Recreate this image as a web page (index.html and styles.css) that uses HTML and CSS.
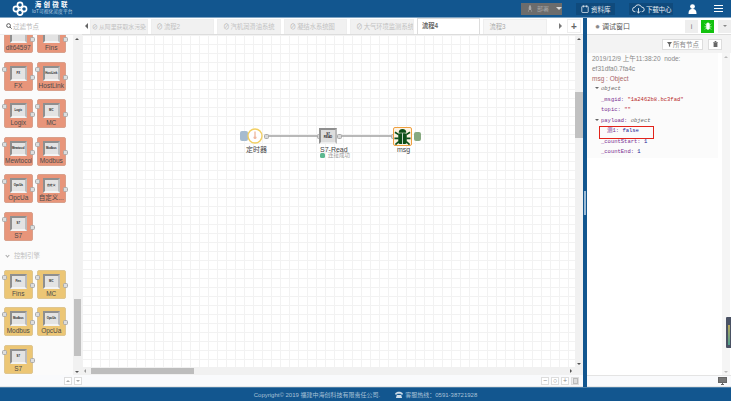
FILE: index.html
```html
<!DOCTYPE html>
<html lang="en">
<head>
  <meta charset="UTF-8">
  <title>海创微联</title>
  <link rel="stylesheet" href="styles.css">
</head>
<body>
  <header class="topbar">
    <div class="brand">
      <svg class="brand-logo" viewBox="0 0 16 15" width="16" height="15">
        <g fill="none" stroke="#fff" stroke-width="1.6">
          <circle cx="8" cy="4" r="2.6"/>
          <circle cx="4" cy="8" r="2.6"/>
          <circle cx="12" cy="8" r="2.6"/>
          <circle cx="8" cy="11.5" r="2.6"/>
        </g>
      </svg>
      <div class="brand-text">
        <div class="brand-name">海创微联</div>
        <div class="brand-sub">IoT可视化灵度平台</div>
      </div>
    </div>
    <div class="top-actions">
      <div class="deploy">
        <svg viewBox="0 0 8 10" width="6" height="9"><path d="M4 0 C6 2 6 5 5.5 7 H2.5 C2 5 2 2 4 0Z M1 9 L2.5 6.5 V9Z M7 9 L5.5 6.5 V9Z" fill="#a8a8a8"/></svg>
        <span>部署</span>
        <i class="deploy-caret"></i>
      </div>
      <div class="top-link link-docs">
        <svg viewBox="0 0 10 10" width="8" height="8"><rect x="1" y="1.5" width="8" height="8" rx="1" fill="none" stroke="#e8eef4" stroke-width="1"/><path d="M3 0.5V3M7 0.5V3" stroke="#e8eef4"/></svg>
        <span>资料库</span>
      </div>
      <div class="top-link link-down">
        <svg viewBox="0 0 14 11" width="13" height="10"><path d="M3.5 8.5H3A2.5 2.5 0 0 1 3 3.5 A4 4 0 0 1 10.5 3.5 A2.5 2.5 0 0 1 11 8.5H10.5" fill="none" stroke="#e8eef4"/><path d="M7 4.5V10M5 8l2 2 2-2" fill="none" stroke="#e8eef4"/></svg>
        <span>下载中心</span>
      </div>
      <svg class="user-icon" viewBox="0 0 9 10" width="9" height="10"><circle cx="4.5" cy="2.6" r="2.4" fill="#fff"/><path d="M0.5 10C0.5 6 2 5 4.5 5S8.5 6 8.5 10Z" fill="#fff"/></svg>
      <div class="menu-icon"><i></i><i></i><i></i></div>
    </div>
  </header>

  <main class="workspace">
    <aside class="palette">
      <div class="palette-filter">
        <svg viewBox="0 0 7 7" width="6" height="6"><circle cx="3" cy="3" r="2.2" fill="none" stroke="#444"/><path d="M4.6 4.6L6.6 6.6" stroke="#444"/></svg>
        <span>过滤节点</span>
      </div>
      <div class="palette-body">
        <div class="palette-list">
          <div class="node-grid node-grid-first">
            <div class="pnode orange"><div class="pnode-icon"></div><span>dlt64597</span><i class="port-r"></i></div>
            <div class="pnode orange"><div class="pnode-icon"></div><span>Fins</span><i class="port-r"></i></div>
            <div class="pnode orange"><i class="port-l"></i><div class="pnode-icon"><b>FX</b></div><span>FX</span><i class="port-r"></i></div>
            <div class="pnode orange"><i class="port-l"></i><div class="pnode-icon"><b>HostLink</b></div><span>HostLink</span><i class="port-r"></i></div>
            <div class="pnode orange"><i class="port-l"></i><div class="pnode-icon"><b>Logix</b></div><span>Logix</span><i class="port-r"></i></div>
            <div class="pnode orange"><i class="port-l"></i><div class="pnode-icon"><b>MC</b></div><span>MC</span><i class="port-r"></i></div>
            <div class="pnode orange"><i class="port-l"></i><div class="pnode-icon"><b>Mewtocol</b></div><span>Mewtocol</span><i class="port-r"></i></div>
            <div class="pnode orange"><i class="port-l"></i><div class="pnode-icon"><b>Modbus</b></div><span>Modbus</span><i class="port-r"></i></div>
            <div class="pnode orange"><i class="port-l"></i><div class="pnode-icon"><b>OpcUa</b></div><span>OpcUa</span><i class="port-r"></i></div>
            <div class="pnode orange"><i class="port-l"></i><div class="pnode-icon"><b>自定义</b></div><span>自定义...</span><i class="port-r"></i></div>
            <div class="pnode orange"><i class="port-l"></i><div class="pnode-icon"><b>S7</b></div><span>S7</span><i class="port-r"></i></div>
          </div>
          <div class="palette-section"><i></i>控制引擎</div>
          <div class="node-grid">
            <div class="pnode yellow"><i class="port-l"></i><div class="pnode-icon"><b>Fins</b></div><span>Fins</span><i class="port-r"></i></div>
            <div class="pnode yellow"><i class="port-l"></i><div class="pnode-icon"><b>MC</b></div><span>MC</span><i class="port-r"></i></div>
            <div class="pnode yellow"><i class="port-l"></i><div class="pnode-icon"><b>Modbus</b></div><span>Modbus</span><i class="port-r"></i></div>
            <div class="pnode yellow"><i class="port-l"></i><div class="pnode-icon"><b>OpcUa</b></div><span>OpcUa</span><i class="port-r"></i></div>
            <div class="pnode yellow"><i class="port-l"></i><div class="pnode-icon"><b>S7</b></div><span>S7</span><i class="port-r"></i></div>
          </div>
        </div>
        <div class="palette-scroll">
          <i class="arrow-up"></i>
          <div class="palette-thumb"></div>
          <i class="arrow-down"></i>
        </div>
      </div>
      <div class="palette-foot">
        <button class="mini-btn"><i class="arrow-up"></i></button>
        <button class="mini-btn"><i class="arrow-down"></i></button>
      </div>
    </aside>

    <section class="editor">
      <div class="tabs">
        <i class="tab-prev"></i>
        <div class="tab tab-first off"><em>⊘</em>从阿里获取水污染</div>
        <div class="tab off"><em>⊘</em>流程2</div>
        <div class="tab off"><em>⊘</em>汽机润滑油系统</div>
        <div class="tab off"><em>⊘</em>凝结水系统图</div>
        <div class="tab off"><em>⊘</em>大气环境监测系统</div>
        <div class="tab active">流程4</div>
        <div class="tab plain">流程3</div>
        <i class="tab-next"></i>
        <div class="tab-add">+</div>
      </div>
      <div class="canvas-wrap">
        <div class="canvas">
          <svg class="wires" width="493" height="332">
            <path d="M186 101H235M257 101H311" stroke="#a3a3a3" stroke-width="1.5" fill="none"/>
          </svg>

          <i class="inject-btn"></i>
          <div class="timer">
            <svg viewBox="0 0 16 16" width="16" height="16"><circle cx="8" cy="8" r="7" fill="#fff" stroke="#f2cf63" stroke-width="1.4"/><path d="M8 3.500V8" stroke="#e8a080" stroke-width="1"/><circle cx="8" cy="9.500" r="1.500" fill="#f0b8a0"/></svg>
          </div>
          <i class="fport fport-timer"></i>
          <div class="flabel flabel-timer">定时器</div>

          <i class="fport fport-s7in"></i>
          <div class="s7"><b>S7<br>READ</b></div>
          <i class="fport fport-s7out"></i>
          <div class="flabel flabel-s7">S7-Read</div>
          <div class="fstatus"><i></i>连接成功</div>

          <i class="fport fport-msg"></i>
          <div class="bug">
            <svg viewBox="0 0 18 18" width="17" height="17">
              <path d="M5 5A4 4 0 0 1 13 5Z" fill="#0d4f18"/>
              <rect x="4.500" y="5.500" width="9" height="11.500" rx="2" fill="#0d4f18"/>
              <path d="M9 5.500V17" stroke="#fff" stroke-width="0.800"/>
              <path d="M5 7L1 4.500M13 7L17 4.500M5 11H0.500M13 11H17.500M5 14.500L1.500 17.500M13 14.500L16.500 17.500" stroke="#0d4f18" stroke-width="1.800" fill="none"/>
            </svg>
          </div>
          <i class="debug-btn"></i>
          <div class="flabel flabel-msg">msg</div>
        </div>
        <div class="vscroll">
          <i class="arrow-up"></i>
          <div class="vthumb"></div>
          <i class="arrow-down"></i>
        </div>
        <div class="hscroll">
          <i class="arrow-left"></i>
          <div class="hthumb"></div>
          <i class="arrow-right"></i>
        </div>
      </div>
      <div class="editor-foot">
        <button class="mini-btn">−</button>
        <button class="mini-btn">○</button>
        <button class="mini-btn">+</button>
        <button class="mini-btn mini-map"><i></i></button>
      </div>
    </section>

    <div class="divider"><i></i></div>

    <aside class="debug">
      <div class="debug-tabs">
        <div class="debug-tab"><em>✹</em>调试窗口</div>
        <button class="side-btn">i</button>
        <button class="side-btn side-green">
          <svg viewBox="0 0 10 10" width="8" height="8"><path d="M3 3.500A2 2.500 0 0 1 7 3.500V7A2 2.500 0 0 1 3 7Z M1 2L3 4M9 2L7 4M0.500 6H3M9.500 6H7M1 9.500L3 7.500M9 9.500L7 7.500" fill="#fff" stroke="#fff" stroke-width="0.700"/></svg>
        </button>
        <button class="side-btn side-more"><i></i></button>
      </div>
      <div class="debug-tools">
        <button class="tool-btn">
          <svg viewBox="0 0 6 6" width="5" height="5"><path d="M0 0H6L3.700 3V6L2.300 5V3Z" fill="#666"/></svg>所有节点
        </button>
        <button class="tool-btn tool-trash">
          <svg viewBox="0 0 6 7" width="5" height="6"><path d="M0 1H6V1.600H0ZM2 0H4V1H2ZM0.700 2H5.300V7H0.700Z" fill="#666"/></svg>
        </button>
      </div>
      <div class="debug-body">
        <div class="debug-log">
          <div class="log-meta">2019/12/9 上午11:38:20&nbsp;&nbsp;node:<br>ef31dfa0.7fa4c</div>
          <div class="log-topic">msg : Object</div>
          <div class="log-tree">
            <div class="tree-row tree-top"><i class="tree-caret"></i><em>object</em></div>
            <div class="tree-row"><span class="k">_msgid:</span> <span class="s">"1a2462b8.bc3fad"</span></div>
            <div class="tree-row"><span class="k">topic:</span> <span class="s">""</span></div>
            <div class="tree-row tree-top"><i class="tree-caret"></i><span class="k">payload:</span> <em>object</em></div>
            <div class="tree-row tree-hit"><span class="k">测1:</span> <span class="b">false</span></div>
            <div class="tree-row"><span class="k">_countStart:</span> <span class="b">1</span></div>
            <div class="tree-row"><span class="k">_countEnd:</span> <span class="b">1</span></div>
          </div>
        </div>
        <div class="debug-scroll">
          <i class="arrow-up"></i>
          <i class="arrow-down"></i>
        </div>
        <div class="edge-tab"><i></i></div>
      </div>
      <div class="debug-foot">
        <svg viewBox="0 0 9 8" width="9" height="8"><rect x="0.500" y="0.500" width="8" height="5" fill="#777" stroke="#666"/><path d="M3 7.500H6M4.500 6V7.500" stroke="#666"/></svg>
      </div>
    </aside>
  </main>

  <footer class="bottombar">
    <span>Copyright© 2019 福建中海创科技有限责任公司.</span>
    <span class="hotline">
      <svg viewBox="0 0 9 8" width="8" height="7"><path d="M0 3C2 0 7 0 9 3V4H6.500V3H2.500V4H0ZM2 4.500H7L8 8H1Z" fill="#cfdde9"/></svg>
      客服热线：0591-38721928
    </span>
  </footer>
</body>
</html>
```

FILE: styles.css
```css
* {
  margin: 0;
  padding: 0;
  box-sizing: border-box;
}

html, body {
  height: 401px;
  overflow: hidden;
}

body {
  display: flex;
  flex-direction: column;
  width: 731px;
  font-family: "Liberation Sans", "Noto Sans CJK SC", sans-serif;
  font-size: 7px;
  color: #555;
  background: #fff;
}

em, i {
  font-style: normal;
}

button {
  font-family: inherit;
  border: none;
}

/* header */
.topbar {
  height: 18px;
  flex: none;
  display: flex;
  justify-content: space-between;
  background: #12568f;
  border-bottom: 1px solid #7ea3c2;
  color: #fff;
}

.brand {
  display: flex;
  align-items: center;
  gap: 4px;
  padding-left: 12px;
}

.brand-text {
  text-align: center;
  line-height: 6.500px;
}

.brand-name {
  font-size: 6.500px;
  font-weight: bold;
  letter-spacing: 2.200px;
}

.brand-sub {
  font-size: 4.800px;
  color: #b9cfe0;
}

.top-actions {
  display: flex;
  align-items: center;
  padding-right: 8px;
}

.deploy {
  width: 41px;
  height: 12px;
  display: flex;
  align-items: center;
  gap: 4px;
  padding-left: 6px;
  background: #6c6c6c;
  color: #a5a5a5;
  font-size: 6px;
}

.deploy-caret {
  margin-left: 3px;
  border: 3px solid transparent;
  border-top-color: #ddd;
  border-bottom: none;
}

.top-link {
  height: 12px;
  display: flex;
  align-items: center;
  gap: 2px;
  background: #0f4a7c;
  color: #e8eef4;
  font-size: 6.500px;
  white-space: nowrap;
}

.link-docs {
  width: 39px;
  margin-left: 14px;
  padding-left: 5px;
}

.link-down {
  width: 44px;
  margin-left: 14px;
  padding-left: 3px;
  gap: 1px;
}

.link-down span {
  letter-spacing: -0.200px;
}

.user-icon {
  margin-left: 15px;
}

.menu-icon {
  width: 9px;
  margin-left: 17px;
  display: flex;
  flex-direction: column;
  gap: 1.500px;
}

.menu-icon i {
  height: 1.500px;
  background: #fff;
}

/* main columns */
.workspace {
  flex: 1;
  min-height: 0;
  display: flex;
  background: #fff;
}

.palette {
  width: 82px;
  flex: none;
  display: flex;
  flex-direction: column;
}

.palette-filter {
  height: 17px;
  flex: none;
  display: flex;
  align-items: center;
  gap: 1px;
  padding-left: 6px;
  color: #b5b5b5;
  font-size: 6.500px;
  background: #fff;
  border-bottom: 1px solid #eee;
}

.palette-body {
  flex: 1;
  min-height: 0;
  display: flex;
  overflow: hidden;
  background: #fbfbfb;
}

.palette-list {
  width: 73px;
  flex: none;
  overflow: hidden;
}

.node-grid {
  display: grid;
  grid-template-columns: 28.500px 28.500px;
  grid-auto-rows: 29px;
  column-gap: 4.500px;
  row-gap: 8.500px;
  padding-left: 4px;
}

.node-grid-first {
  margin-top: -11px;
}

.pnode {
  position: relative;
  height: 29px;
  padding-top: 3px;
  border-radius: 2px;
  border: 1px solid #bbb;
  text-align: center;
  color: #4a4a4a;
  font-size: 6.500px;
  line-height: 8px;
  white-space: nowrap;
}

.pnode.orange {
  background: #e8957a;
  border-color: #d9a08b;
}

.pnode.yellow {
  background: #ecc675;
  border-color: #dfc690;
}

.pnode span {
  display: block;
  margin-top: 1px;
  overflow: hidden;
}

.pnode-icon {
  width: 17px;
  height: 15px;
  margin: 0 auto;
  display: flex;
  align-items: center;
  justify-content: center;
  background: #e3e3e3;
  border: 2px solid #8f8f8f;
  border-right-color: #bcbcbc;
  border-bottom-color: #f3f3f3;
}

.pnode-icon b {
  font-size: 2.800px;
  line-height: 3px;
  color: #222;
  white-space: nowrap;
}

.port-l, .port-r {
  position: absolute;
  width: 5px;
  height: 5px;
  background: #ddd;
  border: 1px solid #aaa;
  border-radius: 1.500px;
}

.port-l {
  left: -3px;
  top: 4px;
}

.port-r {
  right: -3px;
  top: 12px;
}

.palette-section {
  height: 29px;
  display: flex;
  align-items: center;
  gap: 5px;
  padding: 0 0 0 6px;
  color: #bdbdbd;
  font-size: 6.500px;
}

.palette-section i {
  width: 3px;
  height: 3px;
  border-right: 1px solid #aaa;
  border-bottom: 1px solid #aaa;
  transform: rotate(45deg);
}

.palette-scroll {
  width: 9px;
  flex: none;
  position: relative;
  background: #f1f1f1;
}

.palette-thumb {
  position: absolute;
  top: 264px;
  left: 1px;
  width: 7px;
  height: 57px;
  background: #c1c1c1;
}

.palette-foot {
  height: 12px;
  flex: none;
  display: flex;
  justify-content: flex-end;
  align-items: center;
  gap: 2px;
  background: #f9fafc;
  border-bottom: 1px solid #e8e8e8;
}

.mini-btn {
  width: 8px;
  height: 8px;
  display: flex;
  align-items: center;
  justify-content: center;
  background: #fff;
  border: 1px solid #ddd;
  color: #888;
  font-size: 7px;
  line-height: 6px;
}

.arrow-up, .arrow-down {
  display: block;
  width: 0;
  border: 2.500px solid transparent;
}

.arrow-up {
  border-bottom-color: #555;
  border-top: none;
}

.arrow-down {
  border-top-color: #555;
  border-bottom: none;
}

.mini-btn .arrow-up {
  border-bottom-color: #aaa;
}

.mini-btn .arrow-down {
  border-top-color: #aaa;
}

.palette-scroll .arrow-up, .vscroll .arrow-up, .debug-scroll .arrow-up {
  position: absolute;
  top: 3px;
  left: 2px;
}

.palette-scroll .arrow-down, .vscroll .arrow-down, .debug-scroll .arrow-down {
  position: absolute;
  bottom: 2px;
  left: 2px;
}

/* editor */
.editor {
  width: 501px;
  flex: none;
  display: flex;
  flex-direction: column;
}

.tabs {
  height: 17px;
  flex: none;
  display: flex;
  align-items: flex-end;
  gap: 3px;
  padding-right: 2px;
  background: #fff;
  border-bottom: 1px solid #ddd;
}

.tab-prev, .tab-next {
  align-self: center;
  width: 0;
  border: 3px solid transparent;
}

.tab-prev {
  margin: 0 -1px 0 3px;
  border-right-color: #666;
  border-left: none;
}

.tab-next {
  margin-left: 9px;
  border-left-color: #777;
  border-right: none;
}

.tab {
  width: 64px;
  height: 15px;
  padding: 0 0 0 5px;
  line-height: 14px;
  font-size: 6.300px;
  white-space: nowrap;
  overflow: hidden;
  background: #f1f1f1;
  border: 1px solid #eee;
  border-bottom: none;
  color: #c2c2c2;
}

.tab em {
  margin-right: 1px;
  color: #aaa;
}

.tab-first {
  width: 58px;
  padding-left: 1px;
  font-size: 5.900px;
}

.tab.active {
  background: #fff;
  border-color: #ddd;
  color: #666;
  height: 16px;
  padding-left: 4px;
  font-weight: bold;
}

.tab.plain {
  background: #f6f6f6;
  color: #aaa;
}

.tab-add {
  margin-left: 2px;
  width: 14px;
  height: 14px;
  align-self: center;
  text-align: center;
  font-size: 10px;
  line-height: 13px;
  color: #666;
  font-weight: bold;
  background: #fff;
  border: 1px solid #eee;
}

.canvas-wrap {
  flex: 1;
  min-height: 0;
  display: grid;
  grid-template-columns: 493px 8px;
  grid-template-rows: 1fr 8px;
}

.canvas {
  position: relative;
  overflow: hidden;
  background-color: #fff;
  background-image:
    linear-gradient(#f2f2f2 1px, transparent 1px),
    linear-gradient(90deg, #f2f2f2 1px, transparent 1px);
  background-size: 9px 9px;
}

.wires {
  position: absolute;
  left: 0;
  top: 0;
}

.inject-btn {
  position: absolute;
  left: 158px;
  top: 96px;
  width: 8px;
  height: 10px;
  background: #a6bbcf;
  border-radius: 2px;
}

.timer {
  position: absolute;
  left: 165px;
  top: 93px;
  width: 16px;
  height: 16px;
}

.fport {
  position: absolute;
  width: 5px;
  height: 5px;
  background: #d9d9d9;
  border: 1px solid #aaa;
  border-radius: 1.500px;
}

.fport-timer {
  left: 182px;
  top: 98.500px;
}

.fport-s7in {
  left: 235px;
  top: 98.500px;
}

.fport-s7out {
  left: 255px;
  top: 98.500px;
}

.fport-msg {
  left: 309px;
  top: 98.500px;
}

.s7 {
  position: absolute;
  left: 237px;
  top: 93px;
  width: 18px;
  height: 16px;
  display: flex;
  align-items: center;
  justify-content: center;
  text-align: center;
  background: #ddd;
  border: 2px solid #8f8f8f;
  border-right-color: #bbb;
  border-bottom-color: #eee;
}

.s7 b {
  font-size: 3px;
  line-height: 3px;
  color: #222;
}

.bug {
  position: absolute;
  left: 311px;
  top: 92px;
  width: 19px;
  height: 19px;
  display: flex;
  align-items: center;
  justify-content: center;
  background: #fdf3e3;
  border: 1px solid #f0a040;
  border-radius: 2px;
}

.debug-btn {
  position: absolute;
  left: 332px;
  top: 97px;
  width: 7px;
  height: 9px;
  background: #87a980;
  border-radius: 2px;
}

.flabel {
  position: absolute;
  top: 110px;
  color: #444;
  font-size: 7px;
  line-height: 9px;
  white-space: nowrap;
}

.flabel-timer {
  left: 164px;
}

.flabel-s7 {
  left: 238px;
}

.flabel-msg {
  left: 315px;
}

.fstatus {
  position: absolute;
  left: 238px;
  top: 117px;
  display: flex;
  align-items: center;
  gap: 3px;
  font-size: 5.500px;
  line-height: 7px;
  color: #999;
}

.fstatus i {
  width: 5px;
  height: 5px;
  background: #5cb88f;
  border-radius: 1.500px;
}

.vscroll {
  position: relative;
  background: #f1f1f1;
}

.vthumb {
  position: absolute;
  left: 0;
  top: 57px;
  width: 8px;
  height: 46px;
  background: #c1c1c1;
}

.hscroll {
  grid-column: 1 / -1;
  position: relative;
  background: #f1f1f1;
}

.hthumb {
  position: absolute;
  left: 9px;
  top: 1px;
  width: 103px;
  height: 6px;
  background: #bdbdbd;
}

.arrow-left, .arrow-right {
  position: absolute;
  top: 1.500px;
  width: 0;
  border: 2.500px solid transparent;
}

.arrow-left {
  left: 2px;
  border-right-color: #999;
  border-left: none;
}

.arrow-right {
  right: 11px;
  border-left-color: #555;
  border-right: none;
}

.editor-foot {
  height: 12px;
  flex: none;
  display: flex;
  justify-content: flex-end;
  align-items: center;
  gap: 2px;
  padding-right: 4px;
  background: #f9fafc;
  border-bottom: 1px solid #e8e8e8;
}

.mini-map {
  background: #eee;
}

.mini-map i {
  width: 5px;
  height: 6px;
  background: #ddd;
  border: 1px solid #bbb;
}

.divider {
  position: relative;
  width: 4px;
  flex: none;
  background: #12568f;
}

.divider i {
  position: absolute;
  left: 1px;
  top: 173px;
  width: 2px;
  height: 24px;
  background: #9fbdd6;
}

/* debug sidebar */
.debug {
  flex: 1;
  min-width: 0;
  display: flex;
  flex-direction: column;
}

.debug-tabs {
  height: 17px;
  flex: none;
  display: flex;
  align-items: center;
  gap: 3px;
  padding-left: 1px;
  background: #fff;
  border-bottom: 1px solid #ddd;
}

.debug-tab {
  width: 92px;
  height: 15px;
  padding-left: 7px;
  margin-right: 2px;
  line-height: 15px;
  font-size: 7px;
  color: #555;
}

.debug-tab em {
  margin-right: 2px;
  font-size: 6px;
  color: #888;
}

.side-btn {
  width: 13px;
  height: 13px;
  background: #eee;
  color: #777;
  font-size: 7px;
  display: flex;
  align-items: center;
  justify-content: center;
}

.side-green {
  background: #12c20e;
}

.side-more {
  margin-left: 1px;
}

.side-more i {
  border: 2.500px solid transparent;
  border-top-color: #888;
  border-bottom: none;
}

.debug-tools {
  height: 18px;
  flex: none;
  display: flex;
  justify-content: flex-end;
  align-items: center;
  gap: 5px;
  padding-right: 9px;
  background: #f3f3f3;
}

.tool-btn {
  height: 11px;
  display: flex;
  align-items: center;
  gap: 1px;
  padding: 0 3px 0 4px;
  background: #fff;
  border: 1px solid #ddd;
  color: #888;
  font-size: 6.500px;
}

.tool-trash {
  width: 14px;
  justify-content: center;
  padding: 0;
}

.debug-body {
  flex: 1;
  min-height: 0;
  display: flex;
  position: relative;
}

.debug-log {
  width: 131px;
  height: 105px;
  flex: none;
  padding: 1px 0 0 5px;
  background: #fbfbfb;
}

.log-meta {
  font-size: 6.500px;
  line-height: 10px;
  color: #888;
  white-space: nowrap;
}

.log-topic {
  font-size: 6.500px;
  line-height: 9px;
  color: #a66;
}

.log-tree {
  padding: 1px 0 0 3px;
  font-family: "Liberation Mono", "Noto Sans CJK SC", monospace;
  font-size: 5.500px;
}

.tree-row {
  height: 10.500px;
  line-height: 10.500px;
  padding-left: 6px;
  white-space: nowrap;
}

.tree-top {
  padding-left: 0;
}

.tree-caret {
  display: inline-block;
  margin: 0 2px 1px 0;
  border: 2px solid transparent;
  border-top-color: #666;
  border-bottom: none;
}

.tree-row em {
  font-style: italic;
  color: #666;
}

.k {
  color: #792e90;
}

.s {
  color: #b72828;
}

.b {
  color: #1a1a94;
}

.tree-hit {
  position: relative;
  padding-left: 12px;
}

.tree-hit::after {
  content: "";
  position: absolute;
  left: 4px;
  top: -0.500px;
  width: 53px;
  height: 11px;
  border: 1.500px solid #e2231a;
}

.debug-scroll {
  flex: 1;
  position: relative;
  margin: 0 1px 0 4px;
  background: #f5f5f5;
}

.debug-scroll .arrow-up, .debug-scroll .arrow-down {
  left: 1.500px;
}

.debug-scroll .arrow-up {
  border-bottom-color: #bbb;
}

.debug-scroll .arrow-down {
  border-top-color: #bbb;
}

.edge-tab {
  position: absolute;
  right: 0;
  top: 264px;
  width: 5px;
  height: 31px;
  padding: 8px 1px 3px 2px;
  background: #4a5264;
  border-radius: 1px 0 0 1px;
}

.edge-tab i {
  display: block;
  height: 100%;
  background: linear-gradient(#b8a85a, #4fa08f);
}

.debug-foot {
  height: 12px;
  flex: none;
  display: flex;
  justify-content: flex-end;
  padding: 1px 4px 0 0;
  background: #f9fafc;
  border-top: 1px solid #e4e4e4;
  border-bottom: 1px solid #e8e8e8;
}

/* footer */
.bottombar {
  height: 14px;
  flex: none;
  display: flex;
  justify-content: center;
  align-items: center;
  gap: 15px;
  padding-left: 0;
  background: #12568f;
  border-top: 1px solid #4b7fa9;
  color: #a9c2d8;
  font-size: 6px;
}

.hotline {
  display: flex;
  align-items: center;
  gap: 2px;
}
```
